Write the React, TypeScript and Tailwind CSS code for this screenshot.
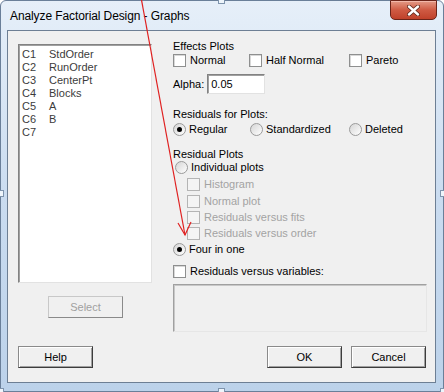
import React from 'react';

const font = { fontFamily: '"Liberation Sans", Arial, sans-serif' };

const columns: [string, string][] = [
    ['C1', 'StdOrder'],
    ['C2', 'RunOrder'],
    ['C3', 'CenterPt'],
    ['C4', 'Blocks'],
    ['C5', 'A'],
    ['C6', 'B'],
    ['C7', ''],
];

const CheckBox: React.FC<{ label: string; disabled?: boolean; className?: string }> = ({ label, disabled, className }) => (
    <div className={`flex items-center ${className ?? ''}`}>
        <span
            className={`w-[13px] h-[13px] shrink-0 border ${disabled
                ? 'border-[#b4b4b4] bg-[#f4f4f4]'
                : 'border-[#8e8f8f] bg-white shadow-[inset_1px_1px_0_#d8d8d8]'}`}
        />
        <span className={`ml-[4px] ${disabled ? 'text-[#a3a3a3]' : 'text-black'}`}>{label}</span>
    </div>
);

const Radio: React.FC<{ label: string; checked?: boolean; className?: string }> = ({ label, checked, className }) => (
    <div className={`flex items-center ${className ?? ''}`}>
        <span className="w-[13px] h-[13px] shrink-0 rounded-full border border-[#9a9a9a] bg-gradient-to-br from-[#d5d5d5] to-white flex items-center justify-center">
            {checked && <span className="w-[5px] h-[5px] rounded-full bg-black" />}
        </span>
        <span className="ml-[3px] text-black">{label}</span>
    </div>
);

const Button: React.FC<{ label: string; disabled?: boolean; className?: string }> = ({ label, disabled, className }) => (
    <div
        className={`h-[22px] w-[75px] flex items-center justify-center bg-[#f0f0f0] border ${disabled
            ? 'border-[#c8c8c8] border-r-[#8a8a8a] border-b-[#8a8a8a] text-[#a0a0a0]'
            : 'border-[#8a8a8a] border-r-[#3c3c3c] border-b-[#3c3c3c] text-black shadow-[inset_1px_1px_0_#fff,inset_-1px_-1px_0_#a0a0a0]'} ${className ?? ''}`}
    >
        {label}
    </div>
);

const Handle: React.FC<{ className: string }> = ({ className }) => (
    <span className={`absolute w-[7px] h-[7px] bg-[#eef5fb] border border-[#7e94ad] ${className}`} />
);

export default function App() {
    return (
        <div className="w-[444px] h-[392px] relative overflow-hidden bg-white" style={font}>
            <div className="w-[444px] h-[392px] flex flex-col bg-gradient-to-b from-[#e6eff9] via-[#cadcf0] to-[#bcd2ea] border border-[#6a7f99] rounded-t-[6px]">
                {/* title bar */}
                <div className="h-[29px] flex items-center pl-[9px] relative">
                    <span className="text-[12px] text-black tracking-[-0.1px]">Analyze Factorial Design - Graphs</span>
                    <div className="absolute right-[6px] top-[-1px] w-[47px] h-[20px] rounded-b-[5px] border border-[#6b2419] bg-gradient-to-b from-[#e39a87] via-[#cf5a43] to-[#c0412a] flex items-center justify-center shadow-[inset_0_1px_0_#f2b8aa]">
                        <svg width="13" height="11" viewBox="0 0 13 11">
                            <path d="M2 1.5 L11 9.5 M11 1.5 L2 9.5" stroke="#5a2418" strokeWidth="4" strokeLinecap="round" />
                            <path d="M2 1.5 L11 9.5 M11 1.5 L2 9.5" stroke="#ffffff" strokeWidth="2.4" strokeLinecap="round" />
                        </svg>
                    </div>
                </div>

                {/* client area */}
                <div className="ml-[6px] mr-[7px] h-[353px] border border-[#6d7f94] bg-[#f0f0f0] text-[11px] leading-[13px] text-black flex flex-col">
                    <div className="flex">
                        {/* left column */}
                        <div className="pl-[10px] w-[154px] flex flex-col">
                            <div className="mt-[13px] w-[134px] h-[239px] bg-white border border-[#828282] border-r-[#e2e2e2] border-b-[#e2e2e2] shadow-[inset_1px_1px_0_#a0a0a0] pt-[3px] pl-[3px]">
                                {columns.map(([c, name]) => (
                                    <div key={c} className="flex h-[13px] text-[#3c3c3c]">
                                        <span className="w-[27px]">{c}</span>
                                        <span>{name}</span>
                                    </div>
                                ))}
                            </div>
                            <Button label="Select" disabled className="mt-[13px] ml-[30px]" />
                        </div>

                        {/* right column */}
                        <div className="ml-[11px] w-[254px] flex flex-col">
                            <div className="mt-[8px] h-[14px] flex items-center">Effects Plots</div>
                            <div className="h-[14px] flex items-center">
                                <CheckBox label="Normal" className="w-[76px]" />
                                <CheckBox label="Half Normal" className="w-[100px]" />
                                <CheckBox label="Pareto" />
                            </div>
                            <div className="mt-[7px] h-[20px] flex items-center">
                                <span>Alpha:</span>
                                <div className="ml-[3px] w-[58px] h-[20px] bg-white border border-[#828282] border-r-[#e2e2e2] border-b-[#e2e2e2] shadow-[inset_1px_1px_0_#a0a0a0] flex items-center pl-[3px]">
                                    0.05
                                </div>
                            </div>
                            <div className="mt-[13px] h-[14px] flex items-center">Residuals for Plots:</div>
                            <div className="mt-[1px] h-[14px] flex items-center">
                                <Radio label="Regular" checked className="w-[77px]" />
                                <Radio label="Standardized" className="w-[99px]" />
                                <Radio label="Deleted" />
                            </div>
                            <div className="mt-[12px] h-[12px] flex items-center">Residual Plots</div>
                            <Radio label="Individual plots" className="h-[14px] ml-[2px]" />
                            <CheckBox label="Histogram" disabled className="mt-[2px] h-[16px] ml-[14px]" />
                            <CheckBox label="Normal plot" disabled className="mt-[1px] h-[16px] ml-[14px]" />
                            <CheckBox label="Residuals versus fits" disabled className="h-[16px] ml-[14px]" />
                            <CheckBox label="Residuals versus order" disabled className="h-[16px] ml-[14px]" />
                            <Radio label="Four in one" checked className="h-[16px]" />
                            <CheckBox label="Residuals versus variables:" className="mt-[6px] h-[16px]" />
                            <div className="mt-[5px] w-[254px] h-[48px] bg-[#f0f0f0] border border-[#a0a0a0] border-r-[#e6e6e6] border-b-[#e6e6e6] shadow-[inset_1px_1px_0_#c8c8c8]" />
                        </div>
                    </div>

                    {/* bottom buttons */}
                    <div className="mt-[14px] flex pl-[10px] pr-[9px]">
                        <Button label="Help" />
                        <div className="flex-1" />
                        <Button label="OK" />
                        <Button label="Cancel" className="ml-[9px]" />
                    </div>
                </div>
            </div>

            {/* snipping handles */}
            <Handle className="left-[218px] top-[-3px]" />
            <Handle className="left-[218px] bottom-[-3px]" />
            <Handle className="left-[-3px] top-[190px]" />
            <Handle className="right-[-3px] top-[190px]" />
            <Handle className="left-[-3px] bottom-[-3px]" />
            <Handle className="right-[-3px] bottom-[-3px]" />

            {/* red annotation arrow */}
            <svg className="absolute left-0 top-0 pointer-events-none" width="444" height="392">
                <path d="M141.5 0 L185 235" stroke="#e02020" strokeWidth="1.2" fill="none" />
                <path d="M178 223 L185 235 L191 222" stroke="#e02020" strokeWidth="1.2" fill="none" />
            </svg>
        </div>
    );
}
